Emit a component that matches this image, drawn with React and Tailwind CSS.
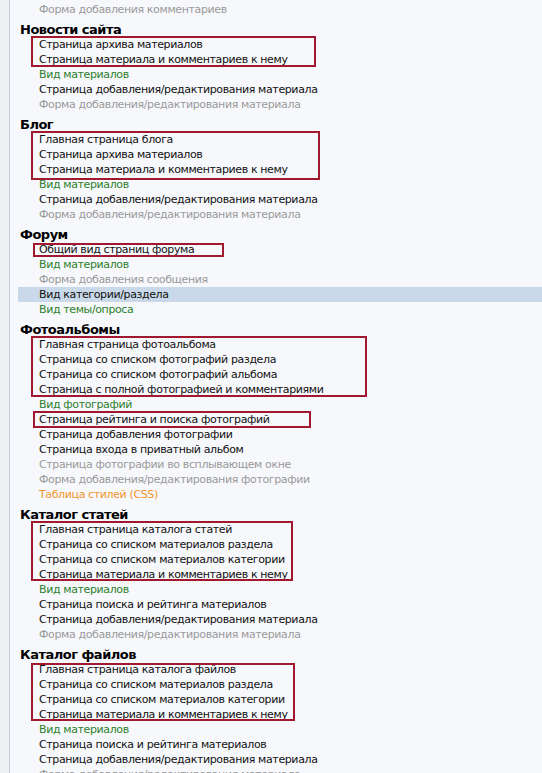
const K = 'k'
const G = 'g'
const M = 'm'
const O = 'o'

const sections = [
  {
    title: 'Новости сайта',
    items: [
      [K, 'Страница архива материалов'],
      [K, 'Страница материала и комментариев к нему'],
      [G, 'Вид материалов'],
      [K, 'Страница добавления/редактирования материала'],
      [M, 'Форма добавления/редактирования материала'],
    ],
  },
  {
    title: 'Блог',
    items: [
      [K, 'Главная страница блога'],
      [K, 'Страница архива материалов'],
      [K, 'Страница материала и комментариев к нему'],
      [G, 'Вид материалов'],
      [K, 'Страница добавления/редактирования материала'],
      [M, 'Форма добавления/редактирования материала'],
    ],
  },
  {
    title: 'Форум',
    items: [
      [K, 'Общий вид страниц форума'],
      [G, 'Вид материалов'],
      [M, 'Форма добавления сообщения'],
      [K, 'Вид категории/раздела', true],
      [G, 'Вид темы/опроса'],
    ],
  },
  {
    title: 'Фотоальбомы',
    items: [
      [K, 'Главная страница фотоальбома'],
      [K, 'Страница со списком фотографий раздела'],
      [K, 'Страница со списком фотографий альбома'],
      [K, 'Страница с полной фотографией и комментариями'],
      [G, 'Вид фотографий'],
      [K, 'Страница рейтинга и поиска фотографий'],
      [K, 'Страница добавления фотографии'],
      [K, 'Страница входа в приватный альбом'],
      [M, 'Страница фотографии во всплывающем окне'],
      [M, 'Форма добавления/редактирования фотографии'],
      [O, 'Таблица стилей (CSS)'],
    ],
  },
  {
    title: 'Каталог статей',
    items: [
      [K, 'Главная страница каталога статей'],
      [K, 'Страница со списком материалов раздела'],
      [K, 'Страница со списком материалов категории'],
      [K, 'Страница материала и комментариев к нему'],
      [G, 'Вид материалов'],
      [K, 'Страница поиска и рейтинга материалов'],
      [K, 'Страница добавления/редактирования материала'],
      [M, 'Форма добавления/редактирования материала'],
    ],
  },
  {
    title: 'Каталог файлов',
    items: [
      [K, 'Главная страница каталога файлов'],
      [K, 'Страница со списком материалов раздела'],
      [K, 'Страница со списком материалов категории'],
      [K, 'Страница материала и комментариев к нему'],
      [G, 'Вид материалов'],
      [K, 'Страница поиска и рейтинга материалов'],
      [K, 'Страница добавления/редактирования материала'],
      [M, 'Форма добавления/редактирования материала'],
    ],
  },
]

const tone = {
  k: 'text-[#111111]',
  g: 'text-[#2c7f2c]',
  m: 'text-[#9a9a9a]',
  o: 'text-[#f0962c]',
}

// red annotation frames drawn over the list
const marks = [
  'left-[31px] top-[36px] w-[285px] h-[31px]',
  'left-[31px] top-[131px] w-[289px] h-[49px]',
  'left-[33px] top-[243px] w-[191px] h-[14px]',
  'left-[31px] top-[336px] w-[336px] h-[61px]',
  'left-[33px] top-[411px] w-[278px] h-[17px]',
  'left-[31px] top-[521px] w-[262px] h-[60px]',
  'left-[31px] top-[663px] w-[264px] h-[58px]',
]

function Item({ kind, label, active }) {
  return (
    <div
      className={`ml-[8px] pl-[21px] h-[15px] leading-[15px] whitespace-nowrap tracking-[-0.38px] ${tone[kind]} ${
        active ? 'bg-[#c9d9e9]' : ''
      }`}
    >
      {label}
    </div>
  )
}

export default function App() {
  return (
    <div
      className="relative flex h-[773px] w-[542px] overflow-hidden bg-[#f7f8fc] text-[11px]"
      style={{ fontFamily: '"DejaVu Sans", Verdana, sans-serif' }}
    >
      <div className="w-[10px] shrink-0 bg-[#eef0f4] border-r border-[#c6cfdb]" />
      <div className="flex-1 -mt-[13.5px]">
        <Item kind={K} label="Страница добавления комментария" />
        <Item kind={M} label="Форма добавления комментариев" />
        {sections.map((s) => (
          <div key={s.title}>
            <div className="pt-[5px] pl-[10px] h-[20px] leading-[15px] text-[13px] tracking-[-0.5px] font-bold text-black whitespace-nowrap">
              {s.title}
            </div>
            {s.items.map(([kind, label, active], i) => (
              <Item key={i} kind={kind} label={label} active={active} />
            ))}
          </div>
        ))}
      </div>

      {marks.map((m) => (
        <div key={m} className={`absolute border-2 border-[#a0192e] ${m}`} />
      ))}
    </div>
  )
}
